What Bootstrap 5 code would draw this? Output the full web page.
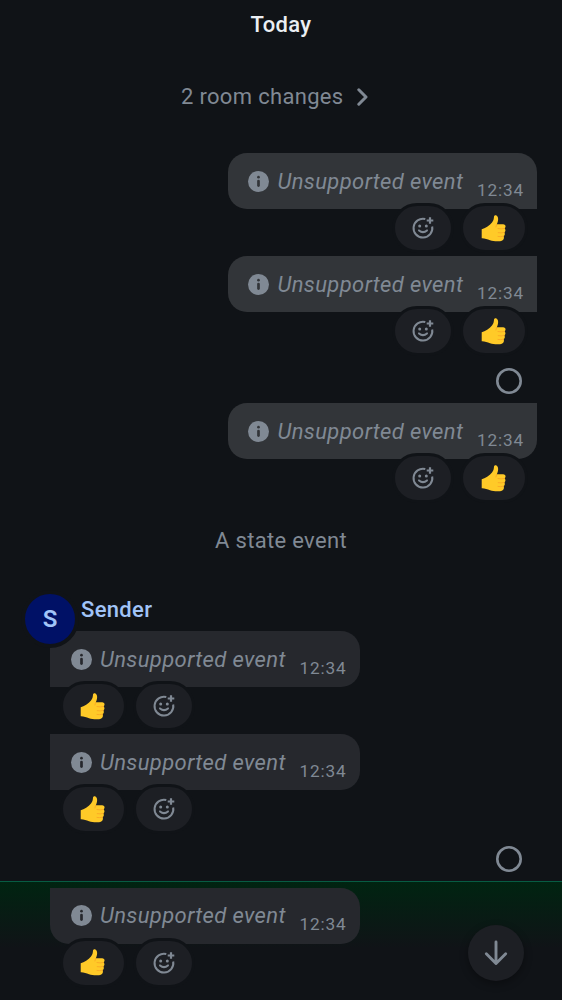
<!DOCTYPE html>
<html lang="en" data-bs-theme="dark">
<head>
<meta charset="utf-8">
<meta name="viewport" content="width=device-width, initial-scale=1">
<title>Timeline</title>
<link href="https://cdn.jsdelivr.net/npm/bootstrap@5.3.0/dist/css/bootstrap.min.css" rel="stylesheet">
<style>
body{background:#101317;color:#808994;font-family:Roboto,sans-serif;font-size:22px;line-height:32px;letter-spacing:.32px}
.timeline{height:1000px}
.day{height:50px;padding-top:9px;color:#ebeef2;font-weight:500;letter-spacing:.3px}
.changes{height:94px;padding-right:13px}
.changes svg{margin-left:13.5px}
.msg{height:103px}
.bubble{width:309.5px;height:56px;padding:0 13px 0 20.5px;background:#323539}
.incoming .bubble{background:#26282d}
.bubble em{margin:1px 0 0 8.5px;white-space:nowrap;letter-spacing:.37px}
.bubble time{margin-left:auto;font-size:17.2px;letter-spacing:.85px;line-height:20px;padding-top:17px}
.r-first{border-radius:19px 19px 0 19px}
.r-mid{border-radius:19px 0 0 19px}
.r-last{border-radius:19px 0 19px 19px}
.r-in{border-radius:0 19px 19px 0}
.r-in-last{border-radius:0 19px 19px 19px}
.reactions{margin-top:-6px;gap:6px;padding:0 9.5px}
.pill{height:50px;width:62px;border:3px solid #101317;border-radius:25px;background:#1d1f24}
.pill.thumb{width:67.5px;padding-right:1px}
.receipt{height:44px;padding-right:40px}
.sent .receipt{padding-right:15px}
.sent{padding:9px 25px 8px 0}
.incoming .indent{padding-left:50px}
.state{height:73px;padding-top:11px}
.avatar{width:58px;height:58px;border:4px solid #101317;border-radius:50%;background:#001166;color:#a1c4f8;font-weight:600;font-size:24px;margin:0 0 -17px -29px;letter-spacing:0}
.sender{color:#a1c4f8;font-weight:500;margin:4px 0 0 2px}
.unread{height:119px;border-top:1px solid #075c43;background:linear-gradient(#002411,#101317 66px);padding-top:5.5px}
.fab{right:38px;bottom:19px;width:56px;height:56px;background:#1d1f24;box-shadow:0 3px 8px #0005}
</style>
</head>
<body>
<svg class="d-none">
<symbol id="info" viewBox="0 0 21 21"><circle cx="10.5" cy="10.5" r="10.5" fill="#808994"/><circle cx="10.5" cy="6.2" r="1.35" fill="var(--hole)"/><path d="M10.5 10v4.6" stroke="var(--hole)" stroke-width="2.7" stroke-linecap="round"/></symbol>
<symbol id="react" viewBox="0 0 24 24"><g fill="none" stroke="#808994" stroke-width="2"><path d="M14.3 3A9.4 9.4 0 1 0 21.2 10.5"/><path d="M8 14.4q4 3.4 8 0" stroke-linecap="round"/><path d="M19 1.2v6.6M15.7 4.5h6.6" stroke-width="2.2"/></g><circle cx="8.7" cy="10" r="1.5" fill="#808994"/><circle cx="15.3" cy="10" r="1.5" fill="#808994"/></symbol>
<symbol id="thumb" viewBox="0 0 25 27"><path fill="#ffca28" d="M.7 14.3C4 13 8.6 10.5 11 7.4c1.6-2 1.8-3.4 2-5.6C13.2.2 14.4-.1 15.5.6c2 1.4 1.9 4.3 1.1 6.6l-.7 2h6.2c1.8 0 2.6 1.2 2.4 2.5-.1.8-.5 1.3-1 1.7 1.4 1 1.2 3.2-.2 3.9.9 1.3.6 3-.7 3.8 1 2.5-.3 4.8-3.4 5.1-3.6.3-7.2.1-10.2-1-2.7-1-5.2-2.1-8.3-2z"/><path d="M15.6 9.4l-.7 2.6M17 13.6q3.3.6 6.4-.1M17.2 17.7q3 .6 6-.3M17 21.5q2.8.5 5.5-.3" fill="none" stroke="#f9a825" stroke-width=".9" stroke-linecap="round"/></symbol>
</svg>
<main class="timeline position-relative overflow-hidden">
<div class="day text-center">Today</div>
<div class="changes d-flex justify-content-center align-items-center"><span>2 room changes</span><svg width="11" height="18" viewBox="0 0 11 18" fill="none" stroke="#808994" stroke-width="3" stroke-linecap="round" stroke-linejoin="round"><path d="M1.8 1.8 9 9l-7.2 7.2"/></svg></div>
<section id="sent" class="sent"></section>
<div class="state text-center">A state event</div>
<section id="received" class="incoming"></section>
<a class="fab position-absolute rounded-circle d-flex align-items-center justify-content-center" aria-label="Scroll down"><svg width="24" height="26" viewBox="0 0 24 26" fill="none" stroke="#808994" stroke-width="2.9" stroke-linecap="round" stroke-linejoin="round"><path d="M12 2v21.5M2.3 13.8l9.7 9.7 9.7-9.7"/></svg></a>
</main>
<script src="https://cdn.jsdelivr.net/npm/bootstrap@5.3.0/dist/js/bootstrap.bundle.min.js"></script>
<script>
const thumb='<span class="pill thumb d-flex align-items-center justify-content-center"><svg width="25" height="27"><use href="#thumb"/></svg></span>';
const add='<span class="pill d-flex align-items-center justify-content-center"><svg width="24" height="24"><use href="#react"/></svg></span>';
const message=(shape,incoming)=>`<div class="msg d-flex flex-column ${incoming?'align-items-start':'align-items-end'}"><div class="bubble d-flex align-items-center ${shape}" style="--hole:${incoming?'#26282d':'#323539'}"><svg class="flex-shrink-0" width="21" height="21"><use href="#info"/></svg><em>Unsupported event</em><time>12:34</time></div><div class="reactions d-flex">${incoming?thumb+add:add+thumb}</div></div>`;
const receipt='<div class="receipt d-flex align-items-center justify-content-end"><svg width="26" height="26"><circle cx="13" cy="13" r="11.7" fill="none" stroke="#808994" stroke-width="2.6"/></svg></div>';
document.getElementById('sent').innerHTML=message('r-first')+message('r-mid')+receipt+message('r-last');
document.getElementById('received').innerHTML='<div class="indent"><div class="d-flex position-relative" style="margin-top:3px"><div class="avatar d-flex align-items-center justify-content-center">S</div><div class="sender">Sender</div></div>'+message('r-in',1)+message('r-in',1)+'</div>'+receipt+'<div class="unread"><div class="indent">'+message('r-in-last',1)+'</div></div>';
</script>
</body>
</html>
